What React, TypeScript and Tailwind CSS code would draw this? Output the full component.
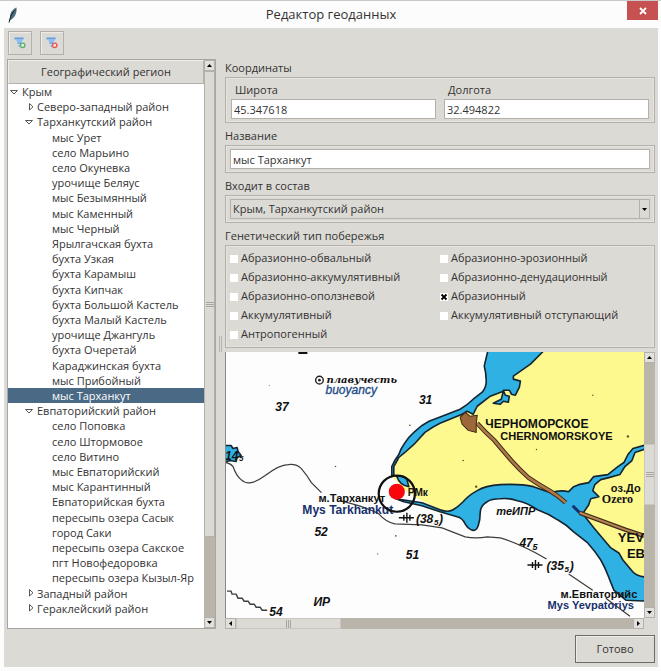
import { useState } from "react";
import type { ReactNode } from "react";
import clsx from "clsx";

type Node = { name: string; level: 0 | 1 | 2; open?: boolean };

const nodes: Node[] = [
  { name: "Крым", level: 0, open: true },
  { name: "Северо-западный район", level: 1, open: false },
  { name: "Тарханкутский район", level: 1, open: true },
  { name: "мыс Урет", level: 2 },
  { name: "село Марьино", level: 2 },
  { name: "село Окуневка", level: 2 },
  { name: "урочище Беляус", level: 2 },
  { name: "мыс Безымянный", level: 2 },
  { name: "мыс Каменный", level: 2 },
  { name: "мыс Черный", level: 2 },
  { name: "Ярылгачская бухта", level: 2 },
  { name: "бухта Узкая", level: 2 },
  { name: "бухта Карамыш", level: 2 },
  { name: "бухта Кипчак", level: 2 },
  { name: "бухта Большой Кастель", level: 2 },
  { name: "бухта Малый Кастель", level: 2 },
  { name: "урочище Джангуль", level: 2 },
  { name: "бухта Очеретай", level: 2 },
  { name: "Караджинская бухта", level: 2 },
  { name: "мыс Прибойный", level: 2 },
  { name: "мыс Тарханкут", level: 2 },
  { name: "Евпаторийский район", level: 1, open: true },
  { name: "село Поповка", level: 2 },
  { name: "село Штормовое", level: 2 },
  { name: "село Витино", level: 2 },
  { name: "мыс Евпаторийский", level: 2 },
  { name: "мыс Карантинный", level: 2 },
  { name: "Евпаторийская бухта", level: 2 },
  { name: "пересыпь озера Сасык", level: 2 },
  { name: "город Саки", level: 2 },
  { name: "пересыпь озера Сакское", level: 2 },
  { name: "пгт Новофедоровка", level: 2 },
  { name: "пересыпь озера Кызыл-Яр", level: 2 },
  { name: "Западный район", level: 1, open: false },
  { name: "Гераклейский район", level: 1, open: false },
];

// column-first order, as the grid fills them
const coastTypes = [
  "Абразионно-обвальный",
  "Абразионно-аккумулятивный",
  "Абразионно-оползневой",
  "Аккумулятивный",
  "Антропогенный",
  "Абразионно-эрозионный",
  "Абразионно-денудационный",
  "Абразионный",
  "Аккумулятивный отступающий",
];

const indent = ["pl-0", "pl-[15px]", "pl-[30px]"];

function FeatherIcon() {
  return (
    <svg width="10" height="16" viewBox="0 0 10 16" aria-hidden="true">
      <path d="M1.500 14 L2 10.500 C2 6 4 2.500 8.500 0.500 C9 5 7.500 9.500 4 12 Z" fill="#4a6c7c" />
      <path d="M1 15.500 C2 10 4 6 7.500 2" stroke="#16232b" strokeWidth="1" fill="none" />
      <path d="M4 4.500 C5 3 6 2 7.500 1.300" stroke="#8fb0bf" strokeWidth="1" fill="none" />
    </svg>
  );
}

function FilterIcon({ badge }: { badge: "add" | "remove" }) {
  const color = badge === "add" ? "#5fae73" : "#ee5252";
  return (
    <svg width="12" height="12" viewBox="0 0 12 12" aria-hidden="true">
      <path d="M0.500 1.500 H9.500" stroke="#5b9fe4" strokeWidth="2" />
      <path d="M2 3 H8.500 L7.500 6 H4 Z" fill="#8cc0f2" />
      <path d="M3.500 6.300 H7 M4.500 9 H7" stroke="#6daaea" strokeWidth="1.500" />
      <circle cx="8.700" cy="8.300" r="2.200" fill="#e6eee6" stroke={color} strokeWidth="1.400" />
    </svg>
  );
}

function Toggle({ open }: { open?: boolean }) {
  if (open === undefined) return null;
  return (
    <svg width="10" height="8" viewBox="-1 0 10 8" aria-hidden="true">
      <path
        d={open ? "M0.500 2.500 H7.500 L4 6 Z" : "M4.500 0.500 V7 L8 3.800 Z"}
        fill="#fff"
        stroke="#555"
        strokeWidth="1"
      />
    </svg>
  );
}

const arrows = {
  up: "M1 5 L3.500 2 L6 5 Z",
  down: "M1 2 L3.500 5 L6 2 Z",
  left: "M5 1 L2 3.500 L5 6 Z",
  right: "M2 1 L5 3.500 L2 6 Z",
};

function Arrow({ dir }: { dir: keyof typeof arrows }) {
  return (
    <svg width="7" height="7" viewBox="0 0 7 7" aria-hidden="true" className="shrink-0">
      <path d={arrows[dir]} fill="#000" />
    </svg>
  );
}

function ScrollButton({ dir, label }: { dir: keyof typeof arrows; label: string }) {
  return (
    <button
      type="button"
      aria-label={label}
      className="flex size-[11px] shrink-0 items-center justify-center border border-[#b5b1aa] bg-[#e2e0dc]"
    >
      <Arrow dir={dir} />
    </button>
  );
}

function Group({ title, children }: { title: string; children: ReactNode }) {
  return (
    <fieldset className="min-w-0">
      <legend className="flex h-[18px] items-center">{title}</legend>
      <div className="border border-[#b5b1aa] px-1 py-[3px] shadow-[inset_0_0_0_1px_#e6e4e0]">
        {children}
      </div>
    </fieldset>
  );
}

const inputClass =
  "block h-5 w-full min-w-0 border border-[#b5b1aa] bg-white px-[2px] leading-4 text-[#333] outline-none";

function Tree() {
  const [selected, setSelected] = useState("мыс Тарханкут");
  return (
    <div className="flex w-[209px] shrink-0 border border-[#aaa69f]">
      <div className="flex min-w-0 flex-1 flex-col bg-white">
        <div className="flex h-6 shrink-0 items-center justify-center border border-t-[#eeece8] border-r-[#b5b1aa] border-b-[#b5b1aa] border-l-[#eeece8] bg-[#dcdad5]">
          Географический регион
        </div>
        <ul className="grid flex-1 auto-rows-fr pb-3">
          {nodes.map((node) => (
            <li key={node.name} className="flex">
              <button
                type="button"
                onClick={() => setSelected(node.name)}
                className={clsx(
                  "flex w-full items-center text-left leading-[15px] whitespace-nowrap",
                  indent[node.level],
                  node.name === selected && "bg-[#4a6984] text-white",
                )}
              >
                <span className="flex w-[14px] shrink-0 justify-center pr-[2px]">
                  <Toggle open={node.open} />
                </span>
                {node.name}
              </button>
            </li>
          ))}
        </ul>
      </div>
      <div className="flex w-[11px] shrink-0 flex-col bg-[#bab5ab]">
        <ScrollButton dir="up" label="Прокрутить список вверх" />
        <div className="flex flex-[466] flex-col items-center justify-center gap-px border border-[#b5b1aa] bg-[#dcdad5]">
          <i className="h-px w-2 bg-[#aaa69f]" />
          <i className="h-px w-2 bg-[#aaa69f]" />
          <i className="h-px w-2 bg-[#aaa69f]" />
        </div>
        <div className="flex-[80]" />
        <ScrollButton dir="down" label="Прокрутить список вниз" />
      </div>
    </div>
  );
}

function CoastTypes() {
  const [checked, setChecked] = useState(["Абразионный"]);
  const toggle = (name: string) =>
    setChecked((prev) =>
      prev.includes(name) ? prev.filter((n) => n !== name) : [...prev, name],
    );
  return (
    <div className="grid auto-cols-fr grid-flow-col grid-rows-5">
      {coastTypes.map((name) => (
        <label key={name} className="flex h-[19px] items-center gap-[3px] whitespace-nowrap">
          <span className="grid size-2 place-items-center">
            <input
              type="checkbox"
              checked={checked.includes(name)}
              onChange={() => toggle(name)}
              className="peer col-start-1 row-start-1 size-2 appearance-none bg-white"
            />
            <svg
              viewBox="0 0 8 8"
              aria-hidden="true"
              className="pointer-events-none invisible col-start-1 row-start-1 size-2 peer-checked:visible"
            >
              <path d="M1.500 1.500 L6.500 6.500 M6.500 1.500 L1.500 6.500" stroke="#000" strokeWidth="1.800" />
            </svg>
          </span>
          {name}
        </label>
      ))}
    </div>
  );
}

// Nautical chart, scrolled so that the selected cape is in view
function Chart() {
  return (
    <svg
      viewBox="227 353 416 265"
      preserveAspectRatio="xMinYMin slice"
      role="img"
      aria-label="Карта: мыс Тарханкут"
      className="block h-0 min-h-full w-full bg-[#fdfdfd]"
    >
      {/* land */}
      <path
        d="M393 478 L395 465 L405 453 L414 443 L429 431 L450 420 L466 412 L490 396 L508 388 L514 376 L542 353 H645 V580 L632 572 L622 560 L610 548 L593 528 L582 515 L568 505 L533 490 L493 488 L477 493 L463 503 L453 511 L440 510 L420 500 L408 493 Z"
        fill="#fdf98f"
      />
      {/* shallow water */}
      <g fill="#2fb1e4" stroke="#142531" strokeWidth="1.600" strokeLinejoin="round">
        <path d="M392 477 L392 467 Q395 460 399 455 Q401 449 404 445 Q408 438 414 433 Q421 426 429 422 L442 417 L460 410 Q468 405 473 400 L482 393 Q486 388 486 382 Q486 374 484 367 L488 350 H545 L530 365 L513 377 L513 380 L520 382 L519 388 L515 396 L511 395 L509 391 L503 391 L505 396 L509 397 L508 403 L503 402 L500 405 L493 404 L501 400 L503 392 L490 397 L477 407 L473 415 L467 412 L462 415 L440 424 Q432 428 425 433 L414 445 L405 453 L399 458 L394 467 L394 476 Z" />
        <path d="M397 477 Q405 475 407 480 L409 487 Q400 486 397 477 Z" />
        <path d="M396 499 L422 503 L440 510 Q448 513 453 510 Q458 507 463 502 Q468 496 477 491 Q485 486 500 485 Q520 484 533 487 L550 493 Q560 490 568 492 L573 487 L578 485 L588 483 L593 477 L607 475 L617 467 L623 463 L627 455 L632 449 L646 445 V449 L634 453 L631 461 L624 467 L619 475 L608 478 L600 480 L594 485 L592 491 L598 497 L590 499 L588 505 L582 514 L593 528 L610 548 L618 553 L622 560 L632 572 Q637 577 646 577 V601 L625 600 L613 590 L607 575 Q604 567 600 560 Q595 552 587 543 L573 532 Q566 525 557 520 Q548 514 537 510 Q527 503 517 501 Q508 498 500 499 Q491 499 487 502 Q480 506 480 513 Q480 520 478 526 Q476 532 471 530 Q467 528 465 524 Q462 518 457 517 L440 512 L422 506 L404 502 Z" />
        <path d="M225 446 L232 446 L234 449 L238 448 L239 452 L242 456 L238 458 L237 462 L231 461 L225 463 Z" />
      </g>
      {/* depth contours */}
      <g fill="none" stroke="#3d3d3d" strokeWidth="1.200">
        <path d="M227 463 Q232 464 234 467 Q237 476 242 480 Q246 484 252 483 Q258 482 266 476 Q280 465 289 465 Q297 464 302 469 Q308 476 312 483 L322 493" />
        <path d="M340 501 Q366 507 379 514 Q386 522 395 524 L422 525 L442 528 L465 537 Q476 539 487 537 L500 538 Q520 544 546 559" />
        <path d="M568 574 L592 590 M605 598 L629 616" />
        <path d="M228 591 l4 0 l1 3 l4 0 l2 4 l4 0 l2 3 l4 0 l2 3 l4 0 l2 3 l4 0 l2 3 l5 0" strokeWidth="1.400" />
      </g>
      {/* roads */}
      <g fill="none">
        <path d="M477 424 Q485 433 494 441 L511 461 Q520 471 528 478 Q538 485 549 491 Q558 496 565 503" stroke="#402c1c" strokeWidth="4.500" />
        <path d="M477 424 Q485 433 494 441 L511 461 Q520 471 528 478 Q538 485 549 491 Q558 496 565 503" stroke="#b07a48" strokeWidth="2.500" />
        <path d="M572 506 L580 514" stroke="#17306e" strokeWidth="3" />
        <path d="M579 513 L625 530 L643 536" stroke="#402c1c" strokeWidth="4.500" />
        <path d="M579 513 L625 530 L643 536" stroke="#b98752" strokeWidth="2" />
      </g>
      <path
        d="M460 418 L465 413 L470 417 L477 416 L476 425 L476 433 L468 431 L462 425 Z"
        fill="#9c6839"
        stroke="#3a2413"
        strokeWidth="1"
      />
      <g fill="#5a5030">
        <circle cx="627" cy="437" r="1.200" />
        <circle cx="592" cy="396" r="0.700" />
        <circle cx="536" cy="450" r="0.700" />
        <circle cx="463" cy="461" r="0.800" />
        <circle cx="476" cy="487" r="1.200" />
        <circle cx="396" cy="536" r="0.800" />
        <circle cx="378" cy="554" r="0.600" />
        <circle cx="410" cy="426" r="0.800" />
        <circle cx="336" cy="467" r="0.700" />
        <circle cx="270" cy="386" r="0.500" />
      </g>
      <path d="M299 354 h9" stroke="#111" strokeWidth="2" />
      <circle cx="320" cy="381" r="3.800" fill="none" stroke="#222" strokeWidth="1.400" />
      <circle cx="320" cy="381" r="1.300" fill="#222" />

      {/* soundings */}
      <g fill="#111" fontFamily="Liberation Sans, sans-serif" fontWeight="bold" fontStyle="italic" fontSize="12">
        <text x="276" y="412">37</text>
        <text x="419" y="405">31</text>
        <text x="226" y="460">14</text>
        <text x="240" y="461" fontSize="8">5</text>
        <text x="315" y="536">52</text>
        <text x="406" y="559">51</text>
        <text x="270" y="616">54</text>
        <text x="519" y="547">47</text>
        <text x="532" y="550" fontSize="9">5</text>
        <text x="416" y="523">(38</text>
        <text x="434" y="525" fontSize="8">5</text>
        <text x="439" y="523">)</text>
        <text x="546" y="570">(35</text>
        <text x="564" y="572" fontSize="8">5</text>
        <text x="569" y="570">)</text>
        <text x="314" y="606">ИР</text>
        <text x="496" y="515" fontSize="11">теИПР</text>
      </g>
      <g stroke="#111" strokeWidth="1.400">
        <path d="M399 518 H414 M404 515 V521 M407 513 V523 M410 515 V521" />
        <path d="M527 565 H542 M532 562 V568 M535 560 V570 M538 562 V568" />
      </g>

      {/* names */}
      <g fill="#111" fontFamily="Liberation Sans, sans-serif" fontWeight="bold">
        <text x="327" y="384" fontSize="10" fontStyle="italic" fontFamily="DejaVu Serif, serif">
          плавучесть
        </text>
        <text x="326" y="395" fontSize="12" fontStyle="italic" fontWeight="normal" fill="#1b4a86" stroke="#1b4a86" strokeWidth="0.300">
          buoyancy
        </text>
        <text x="485" y="429" fontSize="12">
          ЧЕРНОМОРСКОЕ
        </text>
        <text x="500" y="441" fontSize="11">
          CHERNOMORSKOYE
        </text>
        <text x="319" y="502" fontSize="11">м.Тарханкут</text>
        <text x="303" y="514" fontSize="12" fill="#17306e">Mys Tarkhankut</text>
        <text x="408" y="496" fontSize="10">РМк</text>
        <text x="610" y="492" fontSize="11">оз.До</text>
        <text x="601" y="503" fontSize="12" fontFamily="Liberation Serif, serif">Ozero</text>
        <text x="617" y="542" fontSize="13">YEV</text>
        <text x="626" y="558" fontSize="13">ЕВ</text>
        <text x="560" y="598" fontSize="11">м.Евпаторийс</text>
        <text x="547" y="609" fontSize="11" fill="#17306e">Mys  Yevpatoriys</text>
      </g>

      {/* marker */}
      <circle cx="397" cy="494" r="18" fill="none" stroke="#111" strokeWidth="2.200" />
      <circle cx="397" cy="492" r="8" fill="#f8060c" />
    </svg>
  );
}

function MapView() {
  return (
    <div className="grid min-h-[276px] flex-1 grid-cols-[minmax(0,1fr)_11px] grid-rows-[minmax(0,1fr)_11px]">
      <div className="min-h-0 overflow-hidden border-l border-[#888]">
        <Chart />
      </div>
      <div className="flex flex-col bg-[#bab5ab]">
        <ScrollButton dir="up" label="Прокрутить карту вверх" />
        <div className="flex-[81]" />
        <div className="flex flex-[60] flex-col items-center justify-center gap-px border border-[#c9c6c0] bg-[#dcdad5]">
          <i className="h-px w-2 bg-[#aaa69f]" />
          <i className="h-px w-2 bg-[#aaa69f]" />
          <i className="h-px w-2 bg-[#aaa69f]" />
        </div>
        <div className="flex-[102]" />
        <ScrollButton dir="down" label="Прокрутить карту вниз" />
      </div>
      <div className="flex bg-[#bab5ab]">
        <ScrollButton dir="left" label="Прокрутить карту влево" />
        <div className="flex flex-[103] items-center justify-center gap-px border border-[#c9c6c0] bg-[#dcdad5]">
          <i className="h-2 w-px bg-[#aaa69f]" />
          <i className="h-2 w-px bg-[#aaa69f]" />
          <i className="h-2 w-px bg-[#aaa69f]" />
        </div>
        <div className="flex-[292]" />
        <ScrollButton dir="right" label="Прокрутить карту вправо" />
      </div>
    </div>
  );
}

export default function App() {
  return (
    <div className="flex min-h-screen flex-col border-t border-[#c9c9c9] bg-[#fcfcfc] pr-[3px] pb-1 pl-1 font-['Open_Sans','Noto_Sans',sans-serif] text-[11px] text-[#333]">
      <header className="grid h-[27px] shrink-0 grid-cols-[1fr_auto_1fr] items-center">
        <div className="pl-1">
          <FeatherIcon />
        </div>
        <h1 className="text-[13px]">Редактор геоданных</h1>
        <button
          type="button"
          aria-label="Закрыть"
          className="flex h-[19px] w-[31px] items-center justify-center self-start justify-self-end bg-[#c75050]"
        >
          <svg width="8" height="8" viewBox="0 0 8 8" aria-hidden="true">
            <path d="M1 1 L7 7 M7 1 L1 7" stroke="#fff" strokeWidth="1.800" />
          </svg>
        </button>
      </header>

      <main className="flex flex-1 flex-col bg-[#dcdad5] px-[3px] pt-[3px] pb-1">
        <div className="flex gap-2 pl-px">
          <button
            type="button"
            aria-label="Добавить объект"
            className="flex size-6 items-center justify-center border border-[#b5b1aa] shadow-[inset_1px_1px_0_#eeece8]"
          >
            <FilterIcon badge="add" />
          </button>
          <button
            type="button"
            aria-label="Удалить объект"
            className="flex size-6 items-center justify-center border border-[#b5b1aa] shadow-[inset_1px_1px_0_#eeece8]"
          >
            <FilterIcon badge="remove" />
          </button>
        </div>

        <div className="flex flex-1 pt-1">
          <Tree />
          <div className="flex w-[9px] shrink-0 items-center justify-center gap-px">
            <i className="h-4 w-px bg-[#bab5ab]" />
            <i className="h-4 w-px bg-[#bab5ab]" />
          </div>
          <div className="flex min-w-0 flex-1 flex-col gap-1">
            <div className="flex flex-col gap-1">
              <Group title="Координаты">
                <div className="grid grid-cols-2 gap-2 px-px">
                  <label>
                    <span className="flex h-[18px] items-center pl-1">Широта</span>
                    <input className={inputClass} defaultValue="45.347618" />
                  </label>
                  <label>
                    <span className="flex h-[18px] items-center pl-1">Долгота</span>
                    <input className={inputClass} defaultValue="32.494822" />
                  </label>
                </div>
              </Group>
              <Group title="Название">
                <input aria-label="Название" className={inputClass} defaultValue="мыс Тарханкут" />
              </Group>
              <Group title="Входит в состав">
                <div className="grid grid-cols-[minmax(0,1fr)_11px]">
                  <select
                    aria-label="Входит в состав"
                    className="col-span-2 col-start-1 row-start-1 h-5 min-w-0 appearance-none border border-[#b5b1aa] bg-[#dcdad5] px-[2px] leading-4 text-[#333] outline-none"
                  >
                    <option>Крым, Тарханкутский район</option>
                  </select>
                  <span className="pointer-events-none col-start-2 row-start-1 flex items-center justify-center border border-[#b5b1aa]">
                    <Arrow dir="down" />
                  </span>
                </div>
              </Group>
              <Group title="Генетический тип побережья">
                <CoastTypes />
              </Group>
            </div>
            <MapView />
          </div>
        </div>

        <footer className="flex justify-end pt-[6px]">
          <button
            type="button"
            className="h-7 w-20 border border-[#6f6c67] shadow-[inset_1px_1px_0_#eeece8]"
          >
            Готово
          </button>
        </footer>
      </main>
    </div>
  );
}
